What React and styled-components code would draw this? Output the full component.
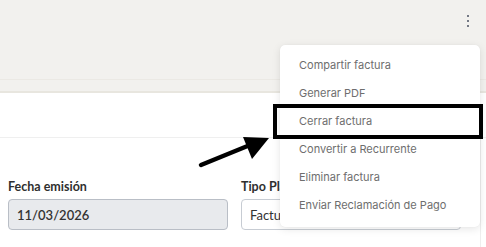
import styled, { createGlobalStyle } from "styled-components";

const GlobalStyle = createGlobalStyle`
  html, body {
    margin: 0;
    padding: 0;
    background: #ffffff;
  }
  body {
    font-family: Inter, "Noto Sans", sans-serif;
    overflow: hidden;
  }
`;

const Page = styled.div`
  position: relative;
  width: 486px;
  height: 247px;
  overflow: hidden;
  background: #ffffff;
`;

const Header = styled.header`
  height: 80px;
  background: #f2f1ee;
  border-bottom: 1px solid #ebe9e4;
  display: flex;
  justify-content: flex-end;
  align-items: flex-start;
  padding: 13px 14px 0 0;
  box-sizing: border-box;
`;

const SubBand = styled.div`
  height: 11px;
  background: #f2f1ee;
  border-bottom: 2px solid #e8e6df;
`;

const KebabButton = styled.button`
  border: none;
  background: transparent;
  padding: 0;
  width: 8px;
  height: 16px;
  display: flex;
  flex-direction: column;
  align-items: center;
  justify-content: center;
  gap: 3px;
  cursor: pointer;

  span {
    width: 2px;
    height: 2px;
    border-radius: 1px;
    background: #4a5160;
  }
`;

const Toolbar = styled.div`
  height: 44px;
  border-bottom: 1px solid #efefef;
`;

const FormSection = styled.section`
  width: 481px;
  box-sizing: border-box;
  border-right: 1px solid #eeeeee;
  padding: 41px 0 20px 8px;
  display: grid;
  grid-template-columns: 220px 220px;
  column-gap: 13px;
`;

const Field = styled.div`
  display: flex;
  flex-direction: column;
  gap: 5px;
`;

const Label = styled.label`
  font-family: Lato, "Noto Sans", sans-serif;
  font-size: 12.5px;
  font-weight: 700;
  color: #2f2f2f;
  line-height: 15px;
  white-space: nowrap;
`;

const Input = styled.div`
  height: 31px;
  box-sizing: border-box;
  border: 1px solid ${(p) => (p.disabled ? "#b9bec6" : "#c7ccd3")};
  border-radius: 4px;
  background: ${(p) => (p.disabled ? "#e8eaed" : "#ffffff")};
  display: flex;
  align-items: center;
  padding: 0 8px;
  font-family: Lato, "Noto Sans", sans-serif;
  font-size: 13px;
  font-weight: ${(p) => (p.disabled ? 600 : 400)};
  color: #333333;
`;

const Menu = styled.ul`
  position: absolute;
  top: 45px;
  left: 280px;
  width: 200px;
  margin: 0;
  padding: 6px 0 8px;
  list-style: none;
  background: #ffffff;
  border-radius: 5px;
  box-shadow: 0 2px 8px rgba(0, 0, 0, 0.1), 0 0 1px rgba(0, 0, 0, 0.08);
`;

const MenuItem = styled.li`
  height: 28px;
  display: flex;
  align-items: center;
  padding-left: 19px;
  font-family: Inter, "Noto Sans", sans-serif;
  font-size: 11px;
  color: #6e6e6e;
  white-space: nowrap;
`;

const Highlight = styled.div`
  position: absolute;
  top: 104px;
  left: 273px;
  width: 210px;
  height: 35px;
  box-sizing: border-box;
  border: 4.5px solid #000000;
`;

const Arrow = styled.svg`
  position: absolute;
  top: 130px;
  left: 195px;
`;

const items = [
  "Compartir factura",
  "Generar PDF",
  "Cerrar factura",
  "Convertir a Recurrente",
  "Eliminar factura",
  "Enviar Reclamación de Pago",
];

export default function App() {
  return (
    <Page>
      <GlobalStyle />
      <Header>
        <KebabButton aria-label="Más opciones">
          <span />
          <span />
          <span />
        </KebabButton>
      </Header>
      <SubBand />
      <Toolbar />
      <FormSection>
        <Field>
          <Label>Fecha emisión</Label>
          <Input disabled>11/03/2026</Input>
        </Field>
        <Field>
          <Label>Tipo Plantilla</Label>
          <Input>Factura</Input>
        </Field>
      </FormSection>

      <Menu>
        {items.map((it) => (
          <MenuItem key={it}>{it}</MenuItem>
        ))}
      </Menu>
      <Highlight />
      <Arrow width="80" height="42" viewBox="0 0 80 42">
        <line x1="6" y1="35" x2="55" y2="15" stroke="#000" strokeWidth="4.5" strokeLinecap="round" />
        <polygon points="74,8 48,7 57,29" fill="#000" />
      </Arrow>
    </Page>
  );
}
